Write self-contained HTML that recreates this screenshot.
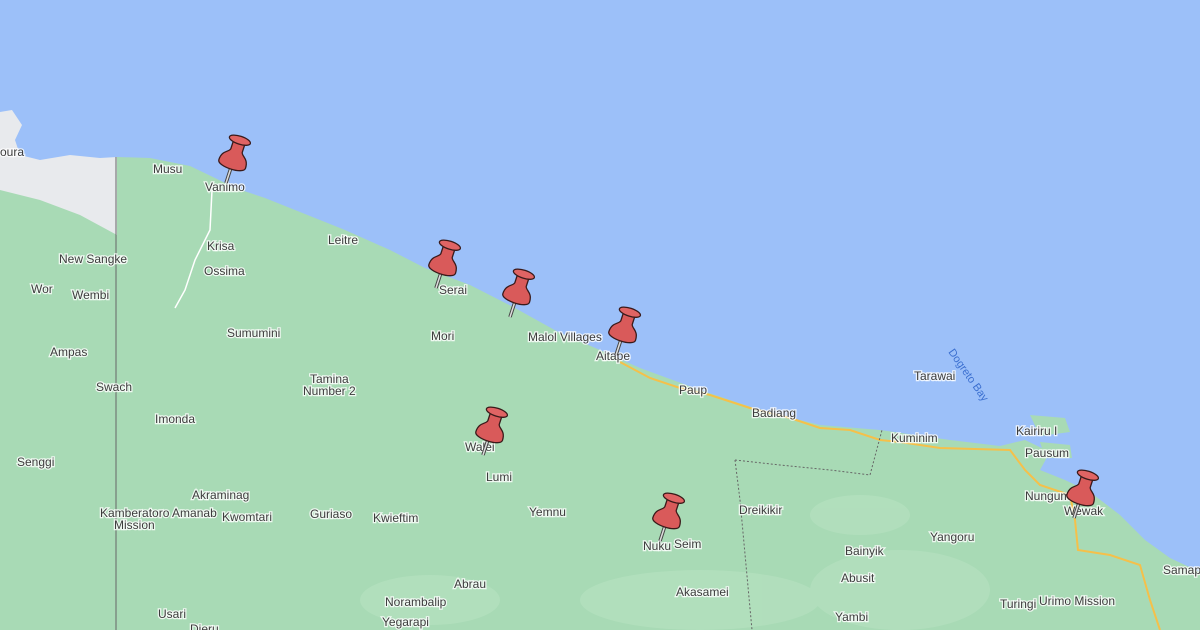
<!DOCTYPE html>
<html><head><meta charset="utf-8"><style>
html,body{margin:0;padding:0;width:1200px;height:630px;overflow:hidden;background:#9cc0f9}
svg{display:block}
text{font-family:"Liberation Sans",sans-serif;font-size:12px;fill:#3c3c3c;paint-order:stroke;stroke:#fff;stroke-width:2.5px;stroke-opacity:.8}
</style></head><body>
<svg width="1200" height="630" viewBox="0 0 1200 630">
<defs>
<g id="pin">
<line x1="0" y1="0" x2="0" y2="-16" stroke="#444" stroke-width="3.5"/>
<line x1="0" y1="0" x2="0" y2="-16" stroke="#ddd" stroke-width="1.5"/>
<path d="M-14,-20 C-14,-30 -7,-30 -6,-34 L-6,-44 L6,-44 L6,-34 C7,-30 14,-30 14,-20 C14,-13 -14,-13 -14,-20Z" fill="#d95a5a" stroke="#3a1a1a" stroke-width="1.3"/>
<ellipse cx="0" cy="-45" rx="11" ry="4" fill="#e06464" stroke="#3a1a1a" stroke-width="1.3"/>
</g>
</defs>
<rect width="1200" height="630" fill="#9cc0f9"/>
<path d="M0,112 L12,110 L22,125 L15,140 L20,155 L40,160 L70,155 L100,158 L117,157 L117,630 L0,630Z" fill="#e8eaed"/>
<path d="M0,190 L40,200 L80,215 L117,235 L117,630 L0,630Z" fill="#a8dab5"/>
<path d="M117,157 L150,158 L190,166 L215,178 L235,188 L265,198 L300,212 L345,230 L390,250 L425,268 L470,285 L515,308 L560,333 L600,350 L640,368 L700,390 L760,410 L820,425 L880,430 L950,440 L1000,446 L1025,440 L1050,452 L1040,470 L1065,480 L1090,492 L1120,515 L1145,540 L1170,558 L1200,572 L1200,630 L117,630Z" fill="#a8dab5"/>
<path d="M1030,415 L1065,418 L1070,432 L1040,436Z M1040,442 L1070,445 L1072,458 L1045,458Z" fill="#a8dab5"/>
<g fill="#b8e2c2" opacity=".6">
<ellipse cx="700" cy="600" rx="120" ry="30"/><ellipse cx="900" cy="590" rx="90" ry="40"/><ellipse cx="430" cy="600" rx="70" ry="25"/><ellipse cx="860" cy="515" rx="50" ry="20"/>
</g>
<line x1="116" y1="157" x2="116" y2="630" stroke="#666" stroke-width="1"/>
<path d="M212,190 L210,230 L195,260 L185,290 L175,308" fill="none" stroke="#fff" stroke-width="1.5"/>
<path d="M620,362 L650,378 L680,388 L710,395 L750,408 L790,418 L820,428 L850,430 L880,440 L900,442 L940,448 L1010,450 L1025,470 L1040,485 L1070,495 L1075,520 L1078,550 L1110,555 L1140,565 L1150,600 L1160,630" fill="none" stroke="#f5c04a" stroke-width="2"/>
<path d="M735,460 L780,465 L830,470 L870,475 L882,430" fill="none" stroke="#666" stroke-width="1" stroke-dasharray="2,2"/>
<path d="M735,460 L740,500 L752,630" fill="none" stroke="#666" stroke-width="1" stroke-dasharray="2,2"/>
<g>
<text x="0" y="156">oura</text><text x="153" y="173">Musu</text><text x="205" y="191">Vanimo</text>
<text x="207" y="250">Krisa</text><text x="328" y="244">Leitre</text><text x="59" y="263">New Sangke</text>
<text x="204" y="275">Ossima</text><text x="31" y="293">Wor</text><text x="72" y="299">Wembi</text>
<text x="439" y="294">Serai</text><text x="227" y="337">Sumumini</text><text x="431" y="340">Mori</text>
<text x="528" y="341">Malol Villages</text><text x="596" y="360">Aitape</text><text x="50" y="356">Ampas</text>
<text x="310" y="383">Tamina</text><text x="303" y="395">Number 2</text><text x="96" y="391">Swach</text>
<text x="679" y="394">Paup</text><text x="155" y="423">Imonda</text><text x="752" y="417">Badiang</text>
<text x="914" y="380">Tarawai</text><text x="891" y="442">Kuminim</text><text x="1016" y="435">Kairiru I</text>
<text x="1025" y="457">Pausum</text><text x="465" y="451">Walei</text><text x="17" y="466">Senggi</text>
<text x="486" y="481">Lumi</text><text x="192" y="499">Akraminag</text><text x="1025" y="500">Nungum</text>
<text x="1064" y="515">Wewak</text><text x="739" y="514">Dreikikir</text><text x="100" y="517">Kamberatoro Amanab</text>
<text x="114" y="529">Mission</text><text x="222" y="521">Kwomtari</text><text x="310" y="518">Guriaso</text>
<text x="373" y="522">Kwieftim</text><text x="529" y="516">Yemnu</text><text x="930" y="541">Yangoru</text>
<text x="643" y="550">Nuku</text><text x="674" y="548">Seim</text><text x="845" y="555">Bainyik</text>
<text x="1163" y="574">Samap</text><text x="841" y="582">Abusit</text><text x="454" y="588">Abrau</text>
<text x="676" y="596">Akasamei</text><text x="385" y="606">Norambalip</text><text x="1000" y="608">Turingi</text>
<text x="1039" y="605">Urimo Mission</text><text x="158" y="618">Usari</text><text x="835" y="621">Yambi</text>
<text x="382" y="626">Yegarapi</text><text x="190" y="633">Dieru</text>
<text x="948" y="352" transform="rotate(55 948 352)" style="fill:#3b6fd0;font-size:11px;stroke:none">Dogreto Bay</text>
</g>
<use href="#pin" transform="translate(226,183) rotate(18)"/>
<use href="#pin" transform="translate(436,288) rotate(18)"/>
<use href="#pin" transform="translate(510,317) rotate(18)"/>
<use href="#pin" transform="translate(616,355) rotate(18)"/>
<use href="#pin" transform="translate(483,455) rotate(18)"/>
<use href="#pin" transform="translate(660,541) rotate(18)"/>
<use href="#pin" transform="translate(1074,518) rotate(18)"/>
</svg>
</body></html>
